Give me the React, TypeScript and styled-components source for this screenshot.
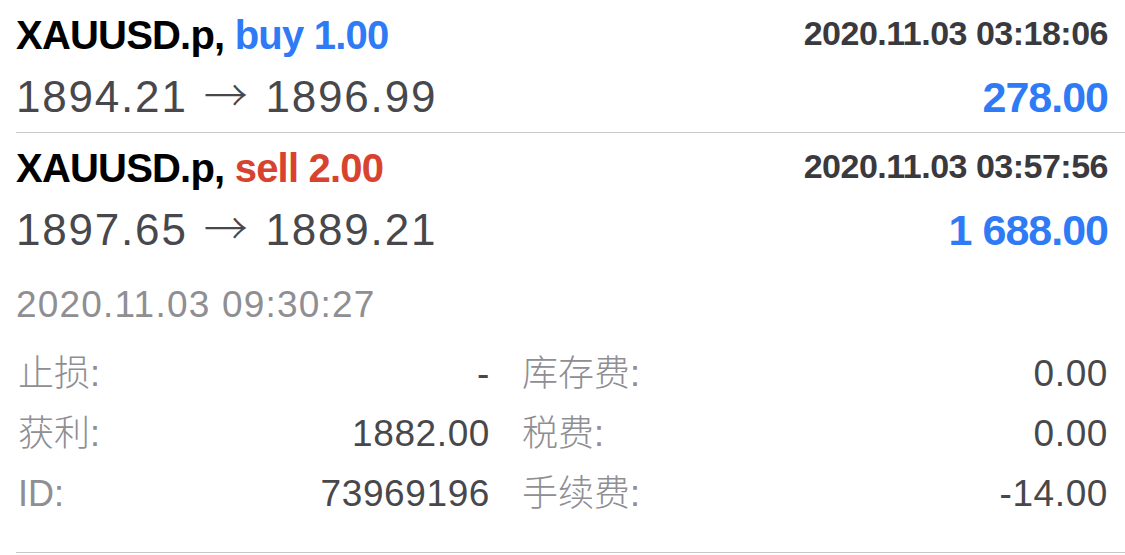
import React from 'react';
import styled, { createGlobalStyle } from 'styled-components';

type Detail = { label: string; value: string };

type Trade = {
  symbol: string;
  side: 'buy' | 'sell';
  volume: string;
  openTime: string;
  openPrice: string;
  closePrice: string;
  profit: string;
  closeTime?: string;
  left?: Detail[];
  right?: Detail[];
};

const trades: Trade[] = [
  {
    symbol: 'XAUUSD.p',
    side: 'buy',
    volume: '1.00',
    openTime: '2020.11.03 03:18:06',
    openPrice: '1894.21',
    closePrice: '1896.99',
    profit: '278.00',
  },
  {
    symbol: 'XAUUSD.p',
    side: 'sell',
    volume: '2.00',
    openTime: '2020.11.03 03:57:56',
    openPrice: '1897.65',
    closePrice: '1889.21',
    profit: '1 688.00',
    closeTime: '2020.11.03 09:30:27',
    left: [
      { label: '止损:', value: '-' },
      { label: '获利:', value: '1882.00' },
      { label: 'ID:', value: '73969196' },
    ],
    right: [
      { label: '库存费:', value: '0.00' },
      { label: '税费:', value: '0.00' },
      { label: '手续费:', value: '-14.00' },
    ],
  },
];

const App = () => {
  return (
    <>
      <GlobalStyle />
      <List>
        {trades.map((trade, key) => (
          <Item key={`trade_${key}`}>
            <TopLine>
              <Title>
                {trade.symbol},{' '}
                <Side side={trade.side}>
                  {trade.side} {trade.volume}
                </Side>
              </Title>
              <OpenTime>{trade.openTime}</OpenTime>
            </TopLine>
            <PriceLine>
              <Prices>
                {trade.openPrice} <Arrow>→</Arrow> {trade.closePrice}
              </Prices>
              <Profit>{trade.profit}</Profit>
            </PriceLine>
            {trade.closeTime && (
              <Details>
                <CloseTime>{trade.closeTime}</CloseTime>
                <DetailGrid>
                  {[trade.left || [], trade.right || []].map((column, c) => (
                    <DetailColumn key={`col_${c}`}>
                      {column.map((d) => (
                        <DetailRow key={d.label}>
                          <Label>{d.label}</Label>
                          <Value>{d.value}</Value>
                        </DetailRow>
                      ))}
                    </DetailColumn>
                  ))}
                </DetailGrid>
              </Details>
            )}
          </Item>
        ))}
      </List>
    </>
  );
};

export default App;

const GlobalStyle = createGlobalStyle`
  body {
    margin: 0;
    background: #ffffff;
    font-family: "Liberation Sans", "Noto Sans CJK SC", sans-serif;
  }
`;

const List = styled.div`
  margin-left: 16px;
`;

const Item = styled.div`
  padding: 7px 17px 1px 0;
  border-bottom: 1px solid #c8c7cc;

  & + & {
    padding-bottom: 0;
  }
`;

const TopLine = styled.div`
  display: flex;
  justify-content: space-between;
  align-items: flex-start;
  height: 56px;
`;

const Title = styled.div`
  font-size: 40px;
  font-weight: 700;
  line-height: 56px;
  letter-spacing: -0.8px;
  color: #000000;
  white-space: nowrap;
`;

const Side = styled.span<{ side: 'buy' | 'sell' }>`
  color: ${({ side }) => (side === 'buy' ? '#2f7bf6' : '#d8432f')};
`;

const OpenTime = styled.div`
  font-size: 34px;
  font-weight: 700;
  line-height: 52px;
  letter-spacing: -0.5px;
  color: #3a3a3e;
`;

const PriceLine = styled.div`
  display: flex;
  justify-content: space-between;
  align-items: flex-start;
  height: 68px;
`;

const Prices = styled.div`
  font-size: 44px;
  line-height: 68px;
  letter-spacing: 1.8px;
  color: #48484c;
  white-space: nowrap;
`;

const Arrow = styled.span`
  font-family: "Noto Sans CJK SC", sans-serif;
  font-weight: 300;
  line-height: 0;
  margin: 0 2px;
`;

const Profit = styled.div`
  font-size: 43px;
  font-weight: 700;
  line-height: 68px;
  letter-spacing: -1px;
  color: #2f7bf6;
`;

const Details = styled.div`
  padding: 16px 0 28px;
`;

const CloseTime = styled.div`
  font-size: 37px;
  line-height: 50px;
  letter-spacing: 1.2px;
  color: #8e8e93;
  margin-bottom: 14px;
`;

const DetailGrid = styled.div`
  display: grid;
  grid-template-columns: 474px 1fr;
  column-gap: 30px;
`;

const DetailColumn = styled.div`
  display: flex;
  flex-direction: column;
`;

const DetailRow = styled.div`
  display: flex;
  justify-content: space-between;
  align-items: baseline;
  height: 60px;
  line-height: 60px;
`;

const Label = styled.span`
  font-size: 36px;
  font-weight: 300;
  color: #8e8e93;
  padding-left: 2px;
`;

const Value = styled.span`
  font-size: 37px;
  letter-spacing: 0.6px;
  color: #48484c;
`;
